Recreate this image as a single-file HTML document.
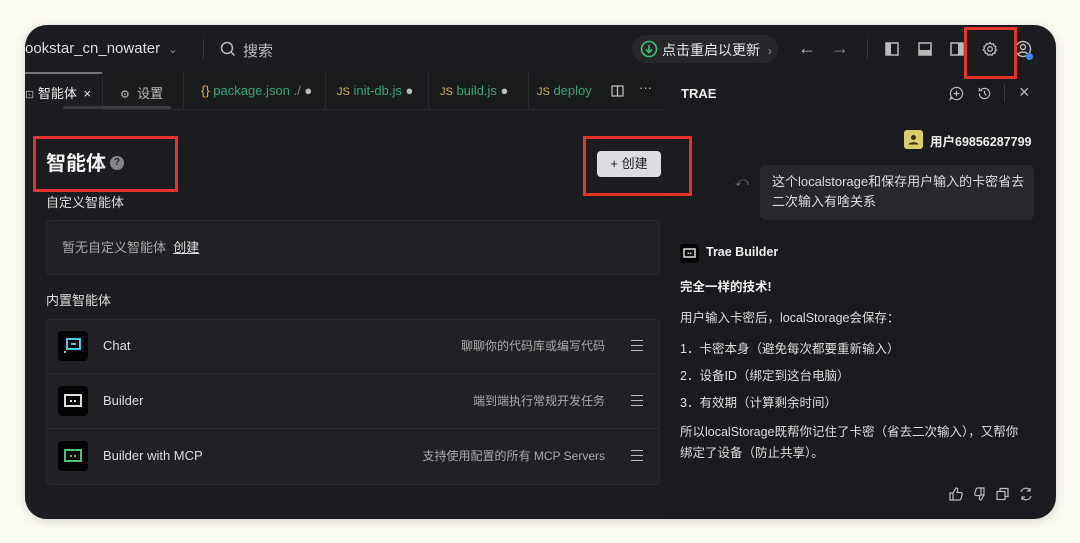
<!DOCTYPE html>
<html><head><meta charset="utf-8"><style>
*{margin:0;padding:0;box-sizing:border-box}
body{width:1080px;height:543px;background:#fbfaf2;font-family:"Liberation Sans","Noto Sans CJK SC",sans-serif;position:relative;overflow:hidden;color:#e6e6e6}
.win{position:absolute;left:25px;top:25px;width:1031px;height:494px;background:#1b1c1f;border-radius:22px;overflow:hidden;box-shadow:0 2px 10px rgba(0,0,0,.15)}
.a{position:absolute}
.left{position:absolute;left:0;top:47px;width:638px;height:447px;background:#1c1d20;border-top-right-radius:10px}
.right{position:absolute;left:642px;top:47px;width:382px;height:447px;background:#1a1b1e;border-radius:8px 8px 20px 0}
.red{position:absolute;border:3px solid #e5322a;z-index:5}
.t{position:absolute;white-space:nowrap}
.row{position:absolute;left:21px;width:614px;height:55px;border-bottom:1px solid #2b2c30}
.ic{position:absolute;left:12px;top:12px;width:30px;height:30px;background:#050505;border-radius:4px}
.menu{position:absolute;right:17px;top:21px;width:12px;height:11px;border-top:1.5px solid #bbb;border-bottom:1.5px solid #bbb}
.menu:after{content:"";position:absolute;left:0;right:0;top:3.5px;border-top:1.5px solid #bbb}
</style></head><body>
<div class="win">
 <div class="t" style="left:0;top:15px;font-size:15px;color:#ddd">ookstar_cn_nowater <span style="font-size:11px;color:#999;margin-left:4px">⌄</span></div>
 <div class="a" style="left:178px;top:14px;width:1px;height:20px;background:#3a3b3f"></div>
 <svg class="a" style="left:195px;top:16px" width="16" height="16" viewBox="0 0 16 16" fill="none" stroke="#bbb" stroke-width="1.5"><circle cx="7" cy="7" r="5.5"/><path d="M11 11l3.5 3.5"/></svg>
 <div class="t" style="left:218px;top:15px;font-size:15px;color:#bbb">搜索</div>
 <div class="a" style="left:607px;top:10px;width:146px;height:28px;background:#26272b;border-radius:14px"></div>
 <svg class="a" style="left:615px;top:15px" width="18" height="18" viewBox="0 0 18 18" fill="none" stroke="#3fbf72" stroke-width="1.6"><circle cx="9" cy="9" r="7.5"/><path d="M9 5v7M6 9.5l3 3 3-3"/></svg>
 <div class="t" style="left:637px;top:15px;font-size:14px;color:#e8e8e8">点击重启以更新 <span style="color:#999;font-size:12px;margin-left:4px">›</span></div>
 <div class="t" style="left:773px;top:13px;font-size:18px;color:#bbb">←</div>
 <div class="t" style="left:806px;top:13px;font-size:18px;color:#888">→</div>
 <div class="a" style="left:842px;top:14px;width:1px;height:20px;background:#3a3b3f"></div>
 <svg class="a" style="left:860px;top:17px" width="14" height="14"><rect x="1" y="1" width="12" height="12" fill="none" stroke="#bbb" stroke-width="1.5"/><rect x="1" y="1" width="5" height="12" fill="#bbb"/></svg>
 <svg class="a" style="left:893px;top:17px" width="14" height="14"><rect x="1" y="1" width="12" height="12" fill="none" stroke="#bbb" stroke-width="1.5"/><rect x="1" y="8" width="12" height="5" fill="#bbb"/></svg>
 <svg class="a" style="left:925px;top:17px" width="14" height="14"><rect x="1" y="1" width="12" height="12" fill="none" stroke="#bbb" stroke-width="1.5"/><rect x="8" y="1" width="5" height="12" fill="#bbb"/></svg>
 <svg class="a" style="left:957px;top:16px" width="16" height="16" viewBox="0 0 16 16" fill="none" stroke="#bbb" stroke-width="1.3"><circle cx="8" cy="8" r="2.3"/><path d="M8 1.5l1.3 1.6 2-.4.6 2 1.9.8-.5 2 1.2 1.5-1.6 1.2.1 2-2 .3-1 1.8-1.9-.8-1.9.8-1-1.8-2-.3.1-2L1.2 9l1.2-1.5-.5-2 1.9-.8.6-2 2 .4z"/></svg>
 <div class="red" style="left:939px;top:2px;width:53px;height:52px"></div>
 <svg class="a" style="left:989px;top:15px" width="18" height="18" viewBox="0 0 18 18" fill="none" stroke="#bbb" stroke-width="1.4"><circle cx="9" cy="9" r="7.5"/><circle cx="9" cy="7" r="2.5"/><path d="M4.5 14c1.5-2.5 7.5-2.5 9 0"/></svg>
 <div class="a" style="left:1001px;top:28px;width:7px;height:7px;background:#3b82f6;border-radius:50%"></div>

 <div class="red" style="left:8px;top:111px;width:145px;height:56px"></div>
 <div class="red" style="left:558px;top:111px;width:109px;height:60px"></div>

 <div class="left">
  <div class="a" style="left:0;top:0;width:638px;height:38px;background:#1a1b1d;border-bottom:1px solid #2a2b2e"></div>
  <div class="a" style="left:0;top:0;width:77px;height:38px;background:#1c1d20;border-top:2px solid #777"></div>
  <div class="t" style="left:0;top:11px;font-size:13px;color:#eee"><span style="color:#aaa;font-size:11px">⊡</span> 智能体 <span style="margin-left:3px">×</span></div>
  <div class="a" style="left:77px;top:0;width:1px;height:38px;background:#2a2b2e"></div>
  <div class="t" style="left:95px;top:11px;font-size:13px;color:#bbb"><span style="font-size:11px">⚙</span>&nbsp; 设置</div>
  <div class="a" style="left:38px;top:34px;width:108px;height:3px;background:#3a3b3f;border-radius:2px"></div>
  <div class="a" style="left:158px;top:0;width:1px;height:38px;background:#2a2b2e"></div>
  <div class="t" style="left:176px;top:11px;font-size:13px;color:#3aa675"><span style="color:#d7b44a">{}</span> package.json <span style="color:#888">./</span> <span style="color:#bbb">●</span></div>
  <div class="a" style="left:300px;top:0;width:1px;height:38px;background:#2a2b2e"></div>
  <div class="t" style="left:312px;top:11px;font-size:13px;color:#3aa675"><span style="color:#d7b44a;font-size:11px">JS</span> init-db.js <span style="color:#bbb">●</span></div>
  <div class="a" style="left:403px;top:0;width:1px;height:38px;background:#2a2b2e"></div>
  <div class="t" style="left:415px;top:11px;font-size:13px;color:#3aa675"><span style="color:#d7b44a;font-size:11px">JS</span> build.js <span style="color:#bbb">●</span></div>
  <div class="a" style="left:503px;top:0;width:1px;height:38px;background:#2a2b2e"></div>
  <div class="t" style="left:512px;top:11px;font-size:13px;color:#3aa675;width:64px;overflow:hidden"><span style="color:#d7b44a;font-size:11px">JS</span> deploy</div>
  <svg class="a" style="left:586px;top:13px" width="13" height="12"><rect x="1" y="1" width="11" height="10" fill="none" stroke="#bbb" stroke-width="1.3"/><path d="M6.5 1v10" stroke="#bbb" stroke-width="1.3"/></svg>
  <div class="t" style="left:614px;top:8px;font-size:13px;color:#bbb">···</div>

  <div class="t" style="left:21px;top:75px;font-size:20px;font-weight:bold;color:#f2f2f2">智能体</div>
  <div class="a" style="left:85px;top:84px;width:14px;height:14px;border-radius:50%;background:#85868b;color:#1c1d20;font-size:10px;font-weight:bold;text-align:center;line-height:14px">?</div>
  <div class="a" style="left:572px;top:79px;width:64px;height:26px;background:#dcdde2;border-radius:4px;color:#222;font-size:13px;text-align:center;line-height:26px">+ 创建</div>
  <div class="t" style="left:21px;top:120px;font-size:13px;color:#ddd">自定义智能体</div>
  <div class="a" style="left:21px;top:148px;width:614px;height:55px;background:#202124;border:1px solid #2a2b2e;border-radius:4px"></div>
  <div class="t" style="left:37px;top:165px;font-size:13px;color:#aaa">暂无自定义智能体 &nbsp;<span style="color:#ddd;text-decoration:underline">创建</span></div>
  <div class="t" style="left:21px;top:218px;font-size:13px;color:#ddd">内置智能体</div>
  <div class="a" style="left:21px;top:247px;width:614px;height:166px;background:#202124;border:1px solid #2a2b2e;border-radius:4px"></div>
  <div class="row" style="top:247px"><div class="ic"><svg width="30" height="30"><rect x="9" y="8" width="13" height="10" fill="none" stroke="#4fc3e8" stroke-width="2"/><rect x="13" y="12" width="5" height="2" fill="#4fc3e8"/><rect x="6" y="20" width="2" height="2" fill="#4fc3e8"/></svg></div>
   <div class="t" style="left:57px;top:19px;font-size:13px;color:#ddd">Chat</div>
   <div class="t" style="right:55px;top:18px;font-size:12px;color:#aaa">聊聊你的代码库或编写代码</div><div class="menu"></div></div>
  <div class="row" style="top:302px"><div class="ic"><svg width="30" height="30"><rect x="7" y="9" width="16" height="11" fill="none" stroke="#ddd" stroke-width="2"/><rect x="12" y="14" width="2" height="2" fill="#ddd"/><rect x="16" y="14" width="2" height="2" fill="#ddd"/></svg></div>
   <div class="t" style="left:57px;top:19px;font-size:13px;color:#ddd">Builder</div>
   <div class="t" style="right:55px;top:18px;font-size:12px;color:#aaa">端到端执行常规开发任务</div><div class="menu"></div></div>
  <div class="row" style="top:357px;border-bottom:none"><div class="ic"><svg width="30" height="30"><rect x="7" y="9" width="16" height="11" fill="none" stroke="#4cc27a" stroke-width="2"/><rect x="12" y="14" width="2" height="2" fill="#4cc27a"/><rect x="16" y="14" width="2" height="2" fill="#4cc27a"/></svg></div>
   <div class="t" style="left:57px;top:19px;font-size:13px;color:#ddd">Builder with MCP</div>
   <div class="t" style="right:55px;top:18px;font-size:12px;color:#aaa">支持使用配置的所有 MCP Servers</div><div class="menu"></div></div>
 </div>

 <div class="right">
  <div class="t" style="left:14px;top:14px;font-size:13px;font-weight:bold;color:#eee">TRAE</div>
  <svg class="a" style="left:282px;top:14px" width="15" height="15" viewBox="0 0 16 16" fill="none" stroke="#bbb" stroke-width="1.3"><path d="M8 1.5a6.5 6.5 0 1 1-4.8 10.9L1.5 14l.8-3A6.5 6.5 0 0 1 8 1.5z"/><path d="M8 5v6M5 8h6"/></svg>
  <svg class="a" style="left:310px;top:14px" width="15" height="15" viewBox="0 0 16 16" fill="none" stroke="#bbb" stroke-width="1.3"><path d="M2.5 8a5.5 5.5 0 1 0 1.6-3.9M2.5 2v3h3"/><path d="M8 5v3l2 2"/></svg>
  <div class="a" style="left:337px;top:12px;width:1px;height:18px;background:#3a3b3f"></div>
  <div class="t" style="left:352px;top:10px;font-size:18px;color:#bbb">×</div>
  <div class="a" style="left:237px;top:58px;width:19px;height:19px;background:#d8cf6a;border-radius:3px"><svg width="19" height="19"><circle cx="9.5" cy="7.5" r="2.5" fill="#3a3512"/><path d="M4.5 14.5c1-3 9-3 10 0z" fill="#3a3512"/></svg></div>
  <div class="t" style="left:263px;top:59px;font-size:12.5px;font-weight:bold;color:#eee">用户69856287799</div>
  <div class="t" style="left:68px;top:102px;font-size:13px;color:#777">⤺</div>
  <div class="a" style="left:93px;top:93px;width:274px;height:55px;background:#27282c;border-radius:6px"></div>
  <div class="t" style="left:105px;top:100px;font-size:13px;color:#ddd;line-height:20px">这个localstorage和保存用户输入的卡密省去<br>二次输入有啥关系</div>
  <div class="a" style="left:13px;top:172px;width:19px;height:19px;background:#050505;border-radius:3px"><svg width="19" height="19"><rect x="4" y="5" width="11" height="8" fill="none" stroke="#ddd" stroke-width="1.5"/><rect x="7.5" y="8.5" width="1.5" height="1.5" fill="#ddd"/><rect x="10" y="8.5" width="1.5" height="1.5" fill="#ddd"/></svg></div>
  <div class="t" style="left:39px;top:173px;font-size:12.5px;font-weight:bold;color:#eee">Trae Builder</div>
  <div class="t" style="left:13px;top:204px;font-size:12.5px;font-weight:bold;color:#eee">完全一样的技术!</div>
  <div class="t" style="left:13px;top:235px;font-size:12.5px;color:#ddd">用户输入卡密后，localStorage会保存：</div>
  <div class="t" style="left:13px;top:266px;font-size:12.5px;color:#ddd">1．卡密本身（避免每次都要重新输入）</div>
  <div class="t" style="left:13px;top:293px;font-size:12.5px;color:#ddd">2．设备ID（绑定到这台电脑）</div>
  <div class="t" style="left:13px;top:320px;font-size:12.5px;color:#ddd">3．有效期（计算剩余时间）</div>
  <div class="t" style="left:13px;top:350px;font-size:12.5px;color:#ddd;line-height:21px">所以localStorage既帮你记住了卡密（省去二次输入），又帮你<br>绑定了设备（防止共享）。</div>
  <svg class="a" style="left:282px;top:415px" width="90" height="14" viewBox="0 0 90 14" fill="none" stroke="#bbb" stroke-width="1.2">
   <path d="M1 6h3v7H1zM4 6l3-5c1.5 0 2 1 1.5 2.5L8 5.5h4c1 0 1.5 1 1.2 2l-1.3 4.5c-.3.7-.8 1-1.5 1H4"/>
   <path d="M35 8h-3V1h3zM35 8l-3 5c-1.5 0-2-1-1.5-2.5L31 8.5h-4c-1 0-1.5-1-1.2-2l1.3-4.5c.3-.7.8-1 1.5-1H35" transform="translate(0,0)"/>
   <rect x="48" y="4.5" width="8" height="8"/><path d="M51 4.5V1.5h8v8h-3"/>
   <path d="M72 5a5 5 0 0 1 9-1.5M82 9a5 5 0 0 1-9 1.5M81 1v3h-3M73 13v-3h3"/>
  </svg>
 </div>
</div>
</body></html>
